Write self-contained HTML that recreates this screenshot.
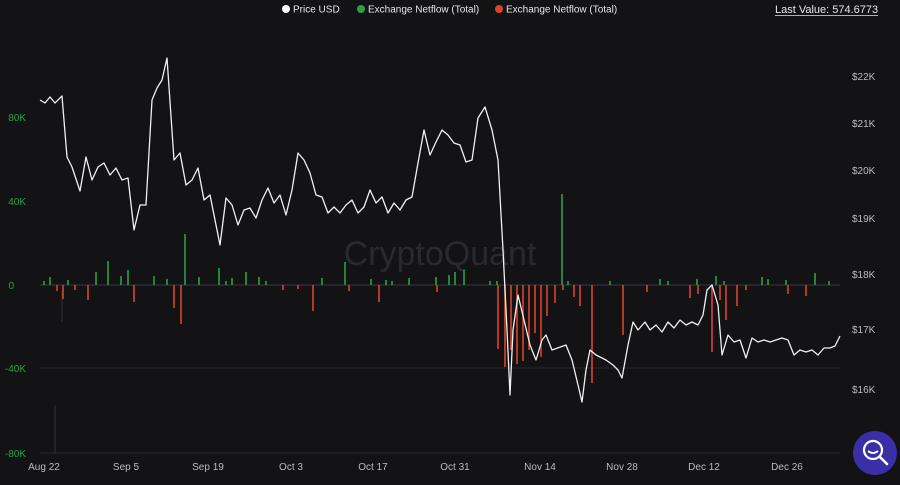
<!DOCTYPE html>
<html><head><meta charset="utf-8"><style>
html,body{margin:0;padding:0;background:#131316;width:900px;height:485px;overflow:hidden;font-family:"Liberation Sans",sans-serif}
</style></head><body>
<svg width="900" height="485" xmlns="http://www.w3.org/2000/svg" style="position:absolute;left:0;top:0">
<rect width="900" height="485" fill="#131316"/>
<g font-size="10" fill="#e6e6e6" font-family="Liberation Sans, sans-serif">
<circle cx="286" cy="9" r="4" fill="#fff"/><text x="293" y="12.5">Price USD</text>
<circle cx="361" cy="9" r="4" fill="#2e9e48"/><text x="368" y="12.5">Exchange Netflow (Total)</text>
<circle cx="499" cy="9" r="4" fill="#d9442a"/><text x="506" y="12.5">Exchange Netflow (Total)</text>
<text x="775" y="13" font-size="11">Last Value: 574.6773</text>
<line x1="775" y1="15.5" x2="878" y2="15.5" stroke="#e6e6e6" stroke-width="0.8"/>
</g>
<line x1="40" y1="368" x2="840" y2="368" stroke="#2a2a2e" stroke-width="1"/>
<line x1="40" y1="453" x2="840" y2="453" stroke="#2a2a2e" stroke-width="1"/>
<line x1="40" y1="285" x2="840" y2="285" stroke="#3a3a3e" stroke-width="1"/>
<line x1="55" y1="405" x2="55" y2="453" stroke="#333" stroke-width="1"/>
<line x1="62" y1="290" x2="62" y2="322" stroke="#333" stroke-width="1"/>
<text x="440" y="265" font-size="34" fill="#2a2a2e" text-anchor="middle" font-family="Liberation Sans, sans-serif">CryptoQuant</text>
<g font-size="10" fill="#2e9e48" font-family="Liberation Sans, sans-serif" text-anchor="end">
<text x="26" y="121">80K</text><text x="26" y="205">40K</text><text x="14" y="289">0</text>
<text x="26" y="372">-40K</text><text x="26" y="457">-80K</text>
</g>
<g font-size="10" fill="#bbb" font-family="Liberation Sans, sans-serif">
<text x="852" y="80">$22K</text><text x="852" y="127">$21K</text><text x="852" y="174">$20K</text>
<text x="852" y="222">$19K</text><text x="852" y="278">$18K</text><text x="852" y="333">$17K</text><text x="852" y="393">$16K</text>
</g>
<g font-size="10" fill="#bbb" font-family="Liberation Sans, sans-serif" text-anchor="middle">
<text x="44" y="470">Aug 22</text><text x="126" y="470">Sep 5</text><text x="208" y="470">Sep 19</text>
<text x="291" y="470">Oct 3</text><text x="373" y="470">Oct 17</text><text x="455" y="470">Oct 31</text>
<text x="540" y="470">Nov 14</text><text x="622" y="470">Nov 28</text><text x="704" y="470">Dec 12</text><text x="787" y="470">Dec 26</text>
</g>
<g stroke="#2e9e48" stroke-width="1.6">
<path d="M44 285V281M50 285V277M68 285V280M96 285V272M108 285V261M121 285V276M128 285V270M154 285V276M167 285V279M185 285V234M199 285V277M219 285V268M226 285V281M232 285V278M246 285V272M259 285V277M266 285V281M322 285V278M345 285V262M371 285V279M386 285V280M392 285V281M409 285V278M436 285V277M449 285V275M455 285V272M464 285V270M490 285V281M497 285V281M562 285V194M568 285V281M610 285V281M660 285V279M668 285V281M697 285V279M716 285V276M724 285V281M762 285V277M768 285V279M786 285V280M815 285V273M829 285V281"/>
</g>
<g stroke="#d9442a" stroke-width="1.6">
<path d="M57 285V291M63 285V299M75 285V290M88 285V300M134 285V302M174 285V308M181 285V324M283 285V290M298 285V289M313 285V311M349 285V291M379 285V302M437 285V292M498 285V349M505 285V367M511 285V350M517 285V364M523 285V361M529 285V350M535 285V333M541 285V357M547 285V316M555 285V303M563 285V290M574 285V297M580 285V306M592 285V383M623 285V335M647 285V292M690 285V298M698 285V294M712 285V352M720 285V300M726 285V320M737 285V306M746 285V290M788 285V294M806 285V296"/>
</g>
<polyline fill="none" stroke="#f0f0f0" stroke-width="1.3" stroke-linejoin="round" points="40,100 45,103 50,97 55,103 62,96 67,157 72,167 80,191 86,157 92,180 98,167 104,163 110,175 116,168 122,180 128,178 134,230 140,205 146,205 152,100 157,88 162,80 167,58 174,160 180,153 186,185 192,180 198,168 204,200 210,195 216,225 220,245 226,198 232,205 238,225 244,210 250,208 256,218 262,200 268,188 274,203 280,195 286,215 292,190 298,153 304,160 310,173 316,195 322,197 328,213 334,207 340,213 346,205 352,200 358,213 364,207 370,190 376,203 382,197 388,213 394,203 400,210 406,200 412,197 418,163 424,130 430,155 436,142 442,130 448,135 454,143 460,145 466,162 472,160 478,118 485,107 492,130 498,160 503,250 507,330 510,395 513,330 518,295 524,320 530,345 536,360 542,340 546,335 552,350 566,345 572,360 578,385 582,402 586,370 590,350 596,355 606,360 613,365 618,370 622,378 628,345 633,322 638,330 645,322 650,330 656,325 662,332 668,322 674,328 680,320 686,325 692,322 698,325 703,315 707,290 712,285 718,305 722,355 728,335 734,342 740,340 746,358 752,338 758,342 764,340 770,342 776,340 782,338 788,340 794,355 800,350 806,352 812,350 818,355 824,348 830,348 835,346 840,336"/>
<circle cx="875" cy="453" r="22" fill="#3b2fa8"/>
<circle cx="873" cy="450" r="9" fill="none" stroke="#fff" stroke-width="2.2"/>
<path d="M868 451Q873 455 878 451" fill="none" stroke="#fff" stroke-width="1.8"/>
<line x1="880" y1="457" x2="887" y2="464" stroke="#fff" stroke-width="2.6" stroke-linecap="round"/>
</svg>
</body></html>
